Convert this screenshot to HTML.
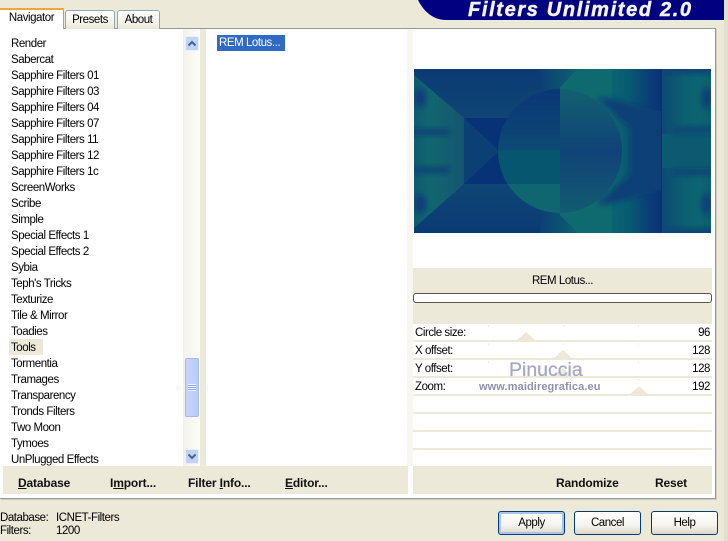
<!DOCTYPE html>
<html><head><meta charset="utf-8">
<style>
html,body{margin:0;padding:0}
body{width:728px;height:541px;overflow:hidden;background:#ece9d8;position:relative;font-family:"Liberation Sans",sans-serif;font-size:11.5px;letter-spacing:-.45px;color:#000}
.a{position:absolute}
.t{position:absolute;white-space:nowrap;line-height:14px}
.li{position:absolute;left:11px;white-space:nowrap;line-height:14px}
.b{position:absolute;white-space:nowrap;font-weight:bold;font-size:12px;letter-spacing:-.15px;line-height:14px;color:#111}
.btn{position:absolute;top:511px;width:67px;height:24px;box-sizing:border-box;border:1px solid #003c74;border-radius:3px;background:linear-gradient(#fff,#f4f3ee 60%,#dcd8c8);text-align:center;line-height:22px}
.row{position:absolute;left:413px;width:299px;height:16px;background:#fff;border-bottom:2px solid #ece9d8}
.tab{position:absolute;box-sizing:border-box;text-align:center;border:1px solid #91a7b4;border-bottom:0;border-radius:3px 3px 0 0;background:linear-gradient(#fff,#f3f1e8 70%,#e8e5d6)}
</style></head><body>

<div class="a" style="left:0;top:28px;width:716px;height:471px;box-sizing:border-box;background:#fff;border:1px solid #919b9c;border-left:0;box-shadow:1px 1px 0 #d0cdbd"></div>

<div class="tab" style="left:65px;top:10px;width:50px;height:19px;line-height:19px">Presets</div>
<div class="tab" style="left:117px;top:10px;width:43px;height:19px;line-height:19px">About</div>
<div class="a" style="left:0;top:8px;width:64px;height:21px;background:#fff;border-right:1px solid #91a7b4;box-sizing:border-box;text-align:center;line-height:20px">Navigator</div>
<div class="a" style="left:0;top:8px;width:64px;height:2px;background:#f2a53a"></div>

<svg class="a" style="left:418px;top:0" width="306" height="20" viewBox="0 0 306 20"><path d="M0 0H306V20H28C14 20 5 10 0 0Z" fill="#000080"/></svg>
<div class="t" style="left:468px;top:-1px;font:italic bold 20px/22px 'Liberation Sans',sans-serif;color:#f4f4f4;letter-spacing:1.65px;-webkit-text-stroke:.5px #f4f4f4">Filters Unlimited 2.0</div>
<div class="a" style="left:724px;top:0;width:4px;height:541px;background:#e3e0cf"></div>

<!-- columns -->
<div class="a" style="left:200px;top:29px;width:6px;height:437px;background:#ece9d8"></div>
<div class="a" style="left:407px;top:29px;width:6px;height:437px;background:#f7f6f0"></div>

<!-- list -->
<div class="a" style="left:9px;top:339px;width:34px;height:16px;background:#ece9d8"></div>
<div class="li" style="top:37px">Render</div>
<div class="li" style="top:53px">Sabercat</div>
<div class="li" style="top:69px">Sapphire Filters 01</div>
<div class="li" style="top:85px">Sapphire Filters 03</div>
<div class="li" style="top:101px">Sapphire Filters 04</div>
<div class="li" style="top:117px">Sapphire Filters 07</div>
<div class="li" style="top:133px">Sapphire Filters 11</div>
<div class="li" style="top:149px">Sapphire Filters 12</div>
<div class="li" style="top:165px">Sapphire Filters 1c</div>
<div class="li" style="top:181px">ScreenWorks</div>
<div class="li" style="top:197px">Scribe</div>
<div class="li" style="top:213px">Simple</div>
<div class="li" style="top:229px">Special Effects 1</div>
<div class="li" style="top:245px">Special Effects 2</div>
<div class="li" style="top:261px">Sybia</div>
<div class="li" style="top:277px">Teph's Tricks</div>
<div class="li" style="top:293px">Texturize</div>
<div class="li" style="top:309px">Tile &amp; Mirror</div>
<div class="li" style="top:325px">Toadies</div>
<div class="li" style="top:341px">Tools</div>
<div class="li" style="top:357px">Tormentia</div>
<div class="li" style="top:373px">Tramages</div>
<div class="li" style="top:389px">Transparency</div>
<div class="li" style="top:405px">Tronds Filters</div>
<div class="li" style="top:421px">Two Moon</div>
<div class="li" style="top:437px">Tymoes</div>
<div class="li" style="top:453px">UnPlugged Effects</div>

<!-- scrollbar -->
<div class="a" style="left:183px;top:29px;width:17px;height:437px;background:linear-gradient(90deg,#f3f1ec,#fdfdfa)"></div>
<div class="a" style="left:185px;top:36px;width:14px;height:15px;box-sizing:border-box;border:1px solid #e8eefc;border-radius:2px;background:#c1d2fb"></div>
<svg class="a" style="left:185px;top:36px" width="14" height="15"><path d="M3.500 9.500L7 6L10.500 9.500" fill="none" stroke="#4d6185" stroke-width="2"/></svg>
<div class="a" style="left:185px;top:358px;width:14px;height:59px;box-sizing:border-box;border:1px solid #a9b9e2;border-radius:2px;background:linear-gradient(90deg,#c6d5fc,#b9cbf8)"></div>
<div class="a" style="left:188px;top:384px;width:8px;height:7px;background:repeating-linear-gradient(#eef3ff 0 1px,#8fa9ee 1px 2px)"></div>
<div class="a" style="left:185px;top:449px;width:14px;height:15px;box-sizing:border-box;border:1px solid #e8eefc;border-radius:2px;background:#c1d2fb"></div>
<svg class="a" style="left:185px;top:449px" width="14" height="15"><path d="M3.500 5.500L7 9L10.500 5.500" fill="none" stroke="#4d6185" stroke-width="2"/></svg>

<!-- selected filter -->
<div class="a" style="left:217px;top:35px;width:68px;height:16px;background:#316ac5;color:#fff;line-height:16px;text-indent:2px;white-space:nowrap">REM Lotus...</div>

<!-- preview -->
<svg class="a" style="left:414px;top:69px" width="297" height="164" viewBox="414 69 297 164">
<defs>
<linearGradient id="g1" x1="0" x2="1" y1="0" y2="0"><stop offset="0" stop-color="#0c6470"/><stop offset=".35" stop-color="#085a72"/><stop offset=".8" stop-color="#0b3a77"/><stop offset="1" stop-color="#0a3276"/></linearGradient>
<linearGradient id="g2" x1="0" x2="1" y1="0" y2="0"><stop offset="0" stop-color="#0d4a72"/><stop offset=".45" stop-color="#0c5f70"/><stop offset=".75" stop-color="#0c6470"/><stop offset="1" stop-color="#0c5f70"/></linearGradient>
<linearGradient id="g4" x1="0" x2="0" y1="0" y2="1"><stop offset="0" stop-color="#12606f"/><stop offset=".5" stop-color="#104377"/><stop offset="1" stop-color="#125a71"/></linearGradient>
<linearGradient id="g5" x1="0" x2="0" y1="0" y2="1"><stop offset="0" stop-color="#0b3676"/><stop offset="1" stop-color="#0b4a74"/></linearGradient>
<linearGradient id="g6" x1="0" x2="1" y1="0" y2="0"><stop offset="0" stop-color="#0d3e74"/><stop offset="1" stop-color="#0b6270"/></linearGradient>
<linearGradient id="g8" x1="0" x2="1" y1="0" y2="0"><stop offset="0" stop-color="#0e5a71"/><stop offset=".3" stop-color="#12666f"/><stop offset="1" stop-color="#15566f"/></linearGradient>
<linearGradient id="g9" x1="0" x2="0" y1="0" y2="1"><stop offset="0" stop-color="#0b3a73"/><stop offset="1" stop-color="#0f4676"/></linearGradient>
<linearGradient id="g10" x1="0" x2="0" y1="0" y2="1"><stop offset="0" stop-color="#0f4676"/><stop offset="1" stop-color="#0b3a73"/></linearGradient>
<filter id="bl" x="-50%" y="-50%" width="200%" height="200%"><feGaussianBlur stdDeviation="3"/></filter>
<filter id="bl2" x="-50%" y="-50%" width="200%" height="200%"><feGaussianBlur stdDeviation="2"/></filter>
<clipPath id="lh"><circle cx="560" cy="151" r="62"/></clipPath>
<clipPath id="wedge"><path d="M414 75L464 118V184L414 228Z"/></clipPath>
<clipPath id="rr"><rect x="662" y="69" width="49" height="164"/></clipPath>
</defs>
<rect x="414" y="69" width="297" height="164" fill="#0d3e74"/>
<!-- top/bottom trapezoids -->
<path d="M414 69H585L510 118H464L414 75Z" fill="url(#g9)"/>
<path d="M414 233H585L510 184H464L414 228Z" fill="url(#g10)"/>
<rect x="540" y="69" width="38" height="164" fill="url(#g6)"/>
<!-- left wedge -->
<g clip-path="url(#wedge)">
<rect x="414" y="75" width="50" height="153" fill="url(#g8)"/>
<rect x="410" y="128" width="40" height="8" fill="#0e4a74" filter="url(#bl2)"/>
<rect x="410" y="166" width="40" height="8" fill="#0e4a74" filter="url(#bl2)"/>
<ellipse cx="420" cy="98" rx="6" ry="10" fill="#0d3e78" filter="url(#bl)"/>
<ellipse cx="420" cy="204" rx="6" ry="10" fill="#0d3e78" filter="url(#bl)"/>
</g>
<!-- centre rectangle and X -->
<rect x="464" y="118" width="48" height="66" fill="#083276"/>
<path d="M464 118L499 151L464 184Z" fill="#0c3f74"/>
<!-- teal band -->
<path d="M578 69H612V233H578L560 215V87Z" fill="#0f6a70"/>
<rect x="612" y="69" width="50" height="164" fill="url(#g1)"/>
<path d="M596 98L630 128V174L596 204H610L662 190V112L610 98Z" fill="#0b3f76" filter="url(#bl)"/>
<!-- right mirrored -->
<g clip-path="url(#rr)">
<rect x="662" y="69" width="49" height="164" fill="url(#g2)"/>
<rect x="662" y="134" width="49" height="34" fill="#0c5a70"/>
<rect x="672" y="126" width="45" height="8" fill="#0e4a74" filter="url(#bl2)"/>
<rect x="672" y="168" width="45" height="8" fill="#0e4a74" filter="url(#bl2)"/>
<rect x="662" y="66" width="54" height="8" fill="#0c4474" filter="url(#bl2)"/>
<rect x="662" y="228" width="54" height="8" fill="#0c4474" filter="url(#bl2)"/>
<ellipse cx="707" cy="98" rx="5" ry="11" fill="#0c3c78" filter="url(#bl)"/>
<ellipse cx="707" cy="204" rx="5" ry="11" fill="#0c3c78" filter="url(#bl)"/>
</g>
<rect x="661" y="69" width="1" height="164" fill="#0a3276"/>
<!-- circle -->
<g clip-path="url(#lh)">
<rect x="490" y="89" width="70" height="61" fill="url(#g5)"/>
<rect x="490" y="150" width="70" height="34" fill="#07566f"/>
<rect x="490" y="184" width="70" height="30" fill="#0f6670"/>
<rect x="560" y="89" width="66" height="124" fill="url(#g4)"/>
</g>
</svg>
<div class="a" style="left:414px;top:233px;width:297px;height:35px;background:#fff"></div>

<!-- right panel -->
<div class="a" style="left:413px;top:268px;width:299px;height:56px;background:#ece9d8"></div>
<div class="t" style="left:413px;width:299px;top:274px;text-align:center">REM Lotus...</div>
<div class="a" style="left:413px;top:293px;width:299px;height:10px;box-sizing:border-box;background:#fff;border:1px solid #555;border-radius:3px"></div>

<div class="row" style="top:324px"></div>
<div class="row" style="top:342px"></div>
<div class="row" style="top:360px"></div>
<div class="row" style="top:378px"></div>
<div class="row" style="top:396px"></div>
<div class="row" style="top:414px"></div>
<div class="row" style="top:432px"></div>
<div class="row" style="top:450px;border:0"></div>

<svg class="a" style="left:413px;top:324px" width="299" height="80">
<path d="M103 17L113 8L123 17Z M140 35L150 26L160 35Z M140 53L150 44L160 53Z M216 71L226 62L236 71Z" fill="#ece9d8"/>
<g fill="#efeee6"><rect x="75" y="1" width="1" height="2"/><rect x="150" y="1" width="1" height="2"/><rect x="225" y="1" width="1" height="2"/><rect x="75" y="19" width="1" height="2"/><rect x="150" y="19" width="1" height="2"/><rect x="225" y="19" width="1" height="2"/><rect x="75" y="37" width="1" height="2"/><rect x="225" y="37" width="1" height="2"/><rect x="225" y="55" width="1" height="2"/></g>
</svg>

<div class="t" style="left:415px;top:326px">Circle size:</div>
<div class="t" style="left:415px;top:344px">X offset:</div>
<div class="t" style="left:415px;top:362px">Y offset:</div>
<div class="t" style="left:415px;top:380px">Zoom:</div>
<div class="t" style="right:18px;top:326px">96</div>
<div class="t" style="right:18px;top:344px">128</div>
<div class="t" style="right:18px;top:362px">128</div>
<div class="t" style="right:18px;top:380px">192</div>

<div class="t" style="left:509px;top:358px;font-size:19.500px;line-height:24px;color:#a6a8c6;letter-spacing:0;-webkit-text-stroke:.3px #a6a8c6">Pinuccia</div>
<div class="t" style="left:479px;top:380px;font-size:11px;color:#8f90ad;font-weight:bold;letter-spacing:.1px">www.maidiregrafica.eu</div>

<!-- toolbars -->
<div class="a" style="left:3px;top:466px;width:405px;height:28px;background:#ece9d8"></div>
<div class="a" style="left:413px;top:466px;width:299px;height:28px;background:#ece9d8"></div>
<div class="b" style="left:18px;top:476px"><u>D</u>atabase</div>
<div class="b" style="left:110px;top:476px">I<u>m</u>port...</div>
<div class="b" style="left:188px;top:476px">Filter <u>I</u>nfo...</div>
<div class="b" style="left:285px;top:476px"><u>E</u>ditor...</div>
<div class="b" style="left:556px;top:476px">Randomize</div>
<div class="b" style="left:655px;top:476px">Reset</div>

<!-- status -->
<div class="t" style="left:0;top:511px">Database:</div>
<div class="t" style="left:56px;top:511px">ICNET-Filters</div>
<div class="t" style="left:0;top:524px">Filters:</div>
<div class="t" style="left:56px;top:524px">1200</div>

<!-- buttons -->
<div class="btn" style="left:498px;box-shadow:inset 0 0 0 2px #a9c4ee">Apply</div>
<div class="btn" style="left:574px">Cancel</div>
<div class="btn" style="left:651px">Help</div>
</body></html>
